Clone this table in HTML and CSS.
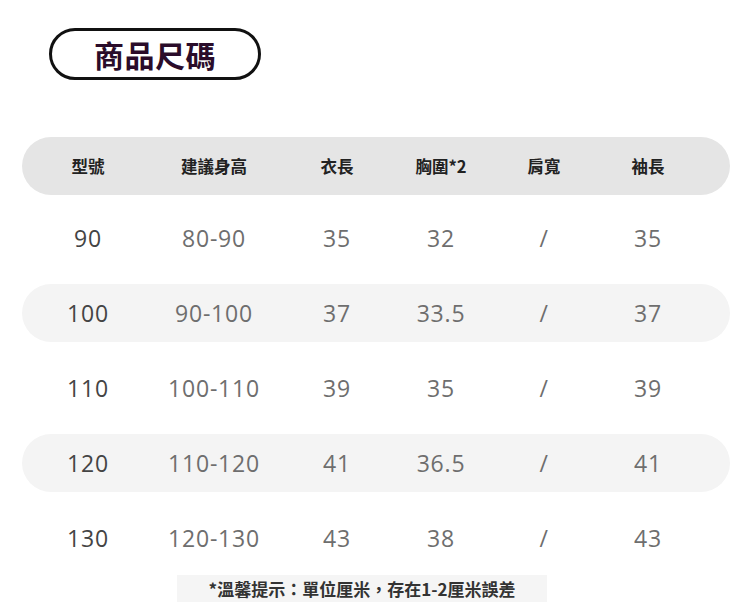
FILE: index.html
```html
<!DOCTYPE html>
<html lang="zh-Hant">
<head>
<meta charset="utf-8">
<link rel="stylesheet" href="styles.css">
</head>
<body>
<div class="page">
  <div class="title"><span>商品尺碼</span></div>
  <div class="table">
    <div class="row head">
      <div>型號</div><div>建議身高</div><div>衣長</div><div>胸圍*2</div><div>肩寬</div><div>袖長</div>
    </div>
    <div class="rows">
      <div class="row"><div class="size">90</div><div>80-90</div><div>35</div><div>32</div><div>/</div><div>35</div></div>
      <div class="row alt"><div class="size">100</div><div>90-100</div><div>37</div><div>33.5</div><div>/</div><div>37</div></div>
      <div class="row"><div class="size">110</div><div>100-110</div><div>39</div><div>35</div><div>/</div><div>39</div></div>
      <div class="row alt"><div class="size">120</div><div>110-120</div><div>41</div><div>36.5</div><div>/</div><div>41</div></div>
      <div class="row"><div class="size">130</div><div>120-130</div><div>43</div><div>38</div><div>/</div><div>43</div></div>
    </div>
  </div>
  <div class="note">*溫馨提示：單位厘米，存在1-2厘米誤差</div>
</div>
</body>
</html>
```

FILE: styles.css
```css
* { box-sizing: border-box; }
html, body { margin: 0; padding: 0; background: #fff; }
.page {
  width: 750px;
  height: 607px;
  overflow: hidden;
  display: flex;
  flex-direction: column;
  font-family: "Noto Sans CJK TC", "Noto Sans", sans-serif;
}
.title {
  margin: 28px 0 0 49px;
  width: 212px;
  height: 52px;
  border: 3px solid #111;
  border-radius: 26px;
  display: flex;
  align-items: center;
  justify-content: center;
}
.title span {
  font-size: 30px;
  font-weight: 700;
  color: #2a0c2a;
  line-height: 1;
  letter-spacing: 0.5px;
}
.table {
  margin: 57px 20px 0 22px;
  display: flex;
  flex-direction: column;
}
.row {
  display: grid;
  grid-template-columns: 132px 120px 126px 82px 124px 84px 1fr;
  height: 58px;
  align-items: center;
  border-radius: 29px;
}
.row > div { text-align: center; }
.head {
  background: #e5e5e5;
  font-size: 16.5px;
  font-weight: 700;
  color: #222;
}
.rows {
  margin-top: 14px;
  display: flex;
  flex-direction: column;
  gap: 17px;
  font-family: "Open Sans", "Noto Sans", sans-serif;
  font-size: 23px;
  letter-spacing: 0.8px;
  color: #6e6e6e;
}
.row.alt { background: #f4f4f4; }
.size { color: #444; }
.note {
  margin: 8px 0 0 177px;
  width: 370px;
  height: 27px;
  background: #f5f5f5;
  display: flex;
  align-items: center;
  justify-content: center;
  font-size: 17px;
  font-weight: 700;
  color: #333;
}
```
